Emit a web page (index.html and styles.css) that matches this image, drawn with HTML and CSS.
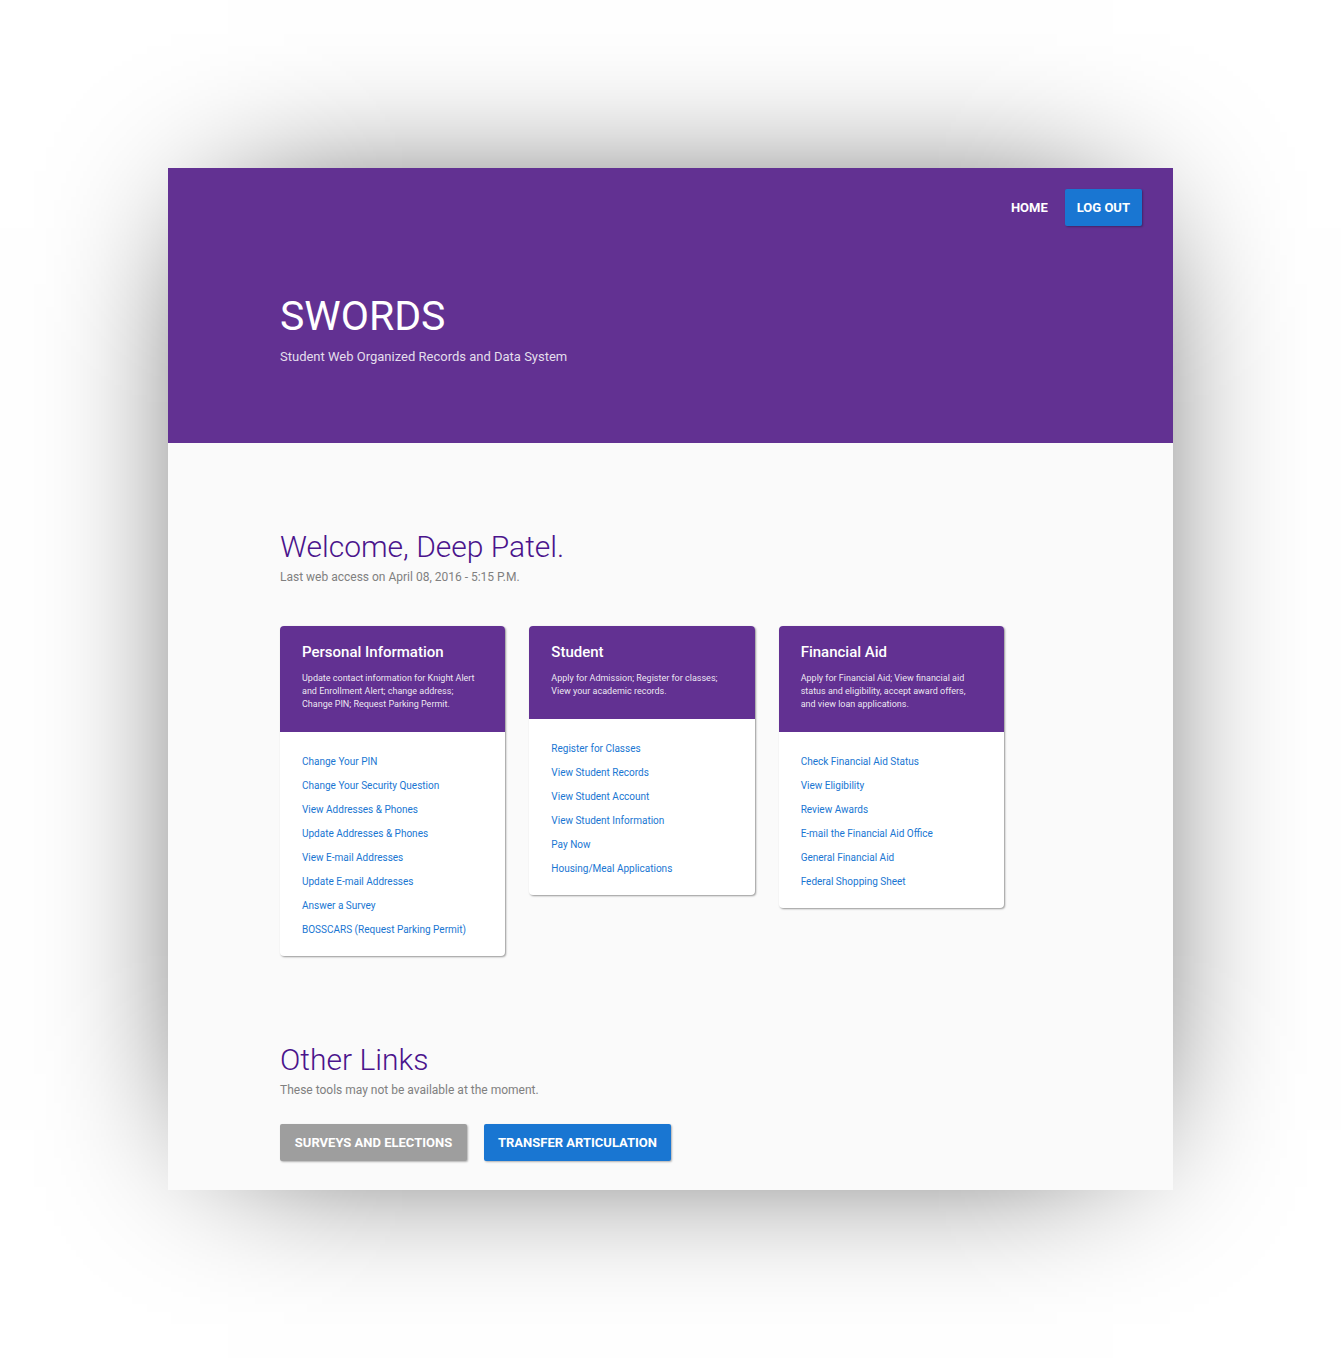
FILE: index.html
```html
<!DOCTYPE html>
<html lang="en">
<head>
  <meta charset="utf-8">
  <meta name="viewport" content="width=device-width, initial-scale=1">
  <title>SWORDS</title>
  <link rel="stylesheet" href="styles.css">
</head>
<body>
  <div class="sheet">
    <header class="banner">
      <nav class="nav">
        <a class="nav-link" href="#home">HOME</a>
        <button class="button button-primary" type="button">LOG OUT</button>
      </nav>
      <div class="banner-text">
        <h1 class="brand">SWORDS</h1>
        <p class="tagline">Student Web Organized Records and Data System</p>
      </div>
    </header>

    <main class="content">
      <section>
        <h2 class="heading">Welcome, Deep Patel.</h2>
        <p class="note">Last web access on April 08, 2016 - 5:15 P.M.</p>

        <div class="cards">
          <article class="card">
            <header class="card-head">
              <h3 class="card-title">Personal Information</h3>
              <p class="card-text">Update contact information for Knight Alert and Enrollment Alert; change address; Change PIN; Request Parking Permit.</p>
            </header>
            <ul class="links">
              <li><a href="#pin">Change Your PIN</a></li>
              <li><a href="#question">Change Your Security Question</a></li>
              <li><a href="#addresses">View Addresses &amp; Phones</a></li>
              <li><a href="#update-addresses">Update Addresses &amp; Phones</a></li>
              <li><a href="#email">View E-mail Addresses</a></li>
              <li><a href="#update-email">Update E-mail Addresses</a></li>
              <li><a href="#survey">Answer a Survey</a></li>
              <li><a href="#bosscars">BOSSCARS (Request Parking Permit)</a></li>
            </ul>
          </article>

          <article class="card">
            <header class="card-head">
              <h3 class="card-title">Student</h3>
              <p class="card-text">Apply for Admission; Register for classes; View your academic records.</p>
            </header>
            <ul class="links">
              <li><a href="#register">Register for Classes</a></li>
              <li><a href="#records">View Student Records</a></li>
              <li><a href="#account">View Student Account</a></li>
              <li><a href="#information">View Student Information</a></li>
              <li><a href="#pay">Pay Now</a></li>
              <li><a href="#housing">Housing/Meal Applications</a></li>
            </ul>
          </article>

          <article class="card">
            <header class="card-head">
              <h3 class="card-title">Financial Aid</h3>
              <p class="card-text">Apply for Financial Aid; View financial aid status and eligibility, accept award offers, and view loan applications.</p>
            </header>
            <ul class="links">
              <li><a href="#status">Check Financial Aid Status</a></li>
              <li><a href="#eligibility">View Eligibility</a></li>
              <li><a href="#awards">Review Awards</a></li>
              <li><a href="#office">E-mail the Financial Aid Office</a></li>
              <li><a href="#general">General Financial Aid</a></li>
              <li><a href="#shopping">Federal Shopping Sheet</a></li>
            </ul>
          </article>
        </div>
      </section>

      <section>
        <h2 class="heading">Other Links</h2>
        <p class="note">These tools may not be available at the moment.</p>
        <div class="actions">
          <button class="button button-muted" type="button">SURVEYS AND ELECTIONS</button>
          <button class="button button-primary" type="button">TRANSFER ARTICULATION</button>
        </div>
      </section>
    </main>
  </div>
</body>
</html>
```
FILE: styles.css
```css
* {
  box-sizing: border-box;
}

body {
  margin: 0;
  padding: 168px;
  background: #fff;
  color: #808080;
  font-family: Roboto, "Liberation Sans", sans-serif;
  overflow-x: hidden;
}

h1,
h2,
h3,
p,
ul {
  margin: 0;
  padding: 0;
}

a {
  color: inherit;
  text-decoration: none;
}

.sheet {
  background: #fafafa;
  box-shadow: 0 0 160px -60px #000;
}

.banner {
  padding-bottom: 76px;
  background: #623192;
  color: #fff;
}

.nav {
  display: flex;
  align-items: center;
  justify-content: flex-end;
  gap: 17px;
  padding: 21px 31px 0;
}

.nav-link {
  font-size: 13px;
  font-weight: 700;
}

.button {
  height: 37px;
  padding: 0 12px;
  border: 0;
  border-radius: 2px;
  color: #fff;
  font: 700 13px/37px Roboto, "Liberation Sans", sans-serif;
  box-shadow: 1px 1px 2px rgba(0, 0, 0, 0.3);
  cursor: pointer;
}

.button-primary {
  background: #1976d2;
}

.button-muted {
  background: #9e9e9e;
}

.banner-text {
  padding: 64px 112px 0;
}

.brand {
  font-size: 41px;
  font-weight: 400;
  line-height: 52px;
}

.tagline {
  margin-top: 5px;
  color: rgba(255, 255, 255, 0.85);
  font-size: 13px;
  font-weight: 400;
  line-height: 20px;
}

.content {
  display: grid;
  gap: 84px;
  padding: 84px 169px 29px 112px;
}

.heading {
  color: #4a148c;
  font-size: 30px;
  font-weight: 300;
  line-height: 40px;
}

.note {
  font-size: 12px;
  line-height: 20px;
}

.cards {
  display: grid;
  grid-template-columns: repeat(3, 1fr);
  align-items: start;
  gap: 24px;
  margin-top: 39px;
}

.card {
  overflow: hidden;
  border-radius: 4px;
  background: #fff;
  box-shadow: 1px 1px 2px rgba(0, 0, 0, 0.4);
}

.card-head {
  padding: 16px 22px 21px;
  background: #623192;
  color: #fff;
}

.card-title {
  font-size: 15px;
  font-weight: 500;
  line-height: 20px;
}

.card-text {
  margin-top: 10px;
  color: rgba(255, 255, 255, 0.9);
  font-size: 9px;
  line-height: 13px;
}

.links {
  padding: 18px 22px 14px;
  color: #1976d2;
  font-size: 10px;
  line-height: 24px;
  list-style: none;
}

.actions {
  display: flex;
  flex-wrap: wrap;
  gap: 17px;
  margin-top: 24px;
}

.actions .button {
  min-width: 187px;
}
```
